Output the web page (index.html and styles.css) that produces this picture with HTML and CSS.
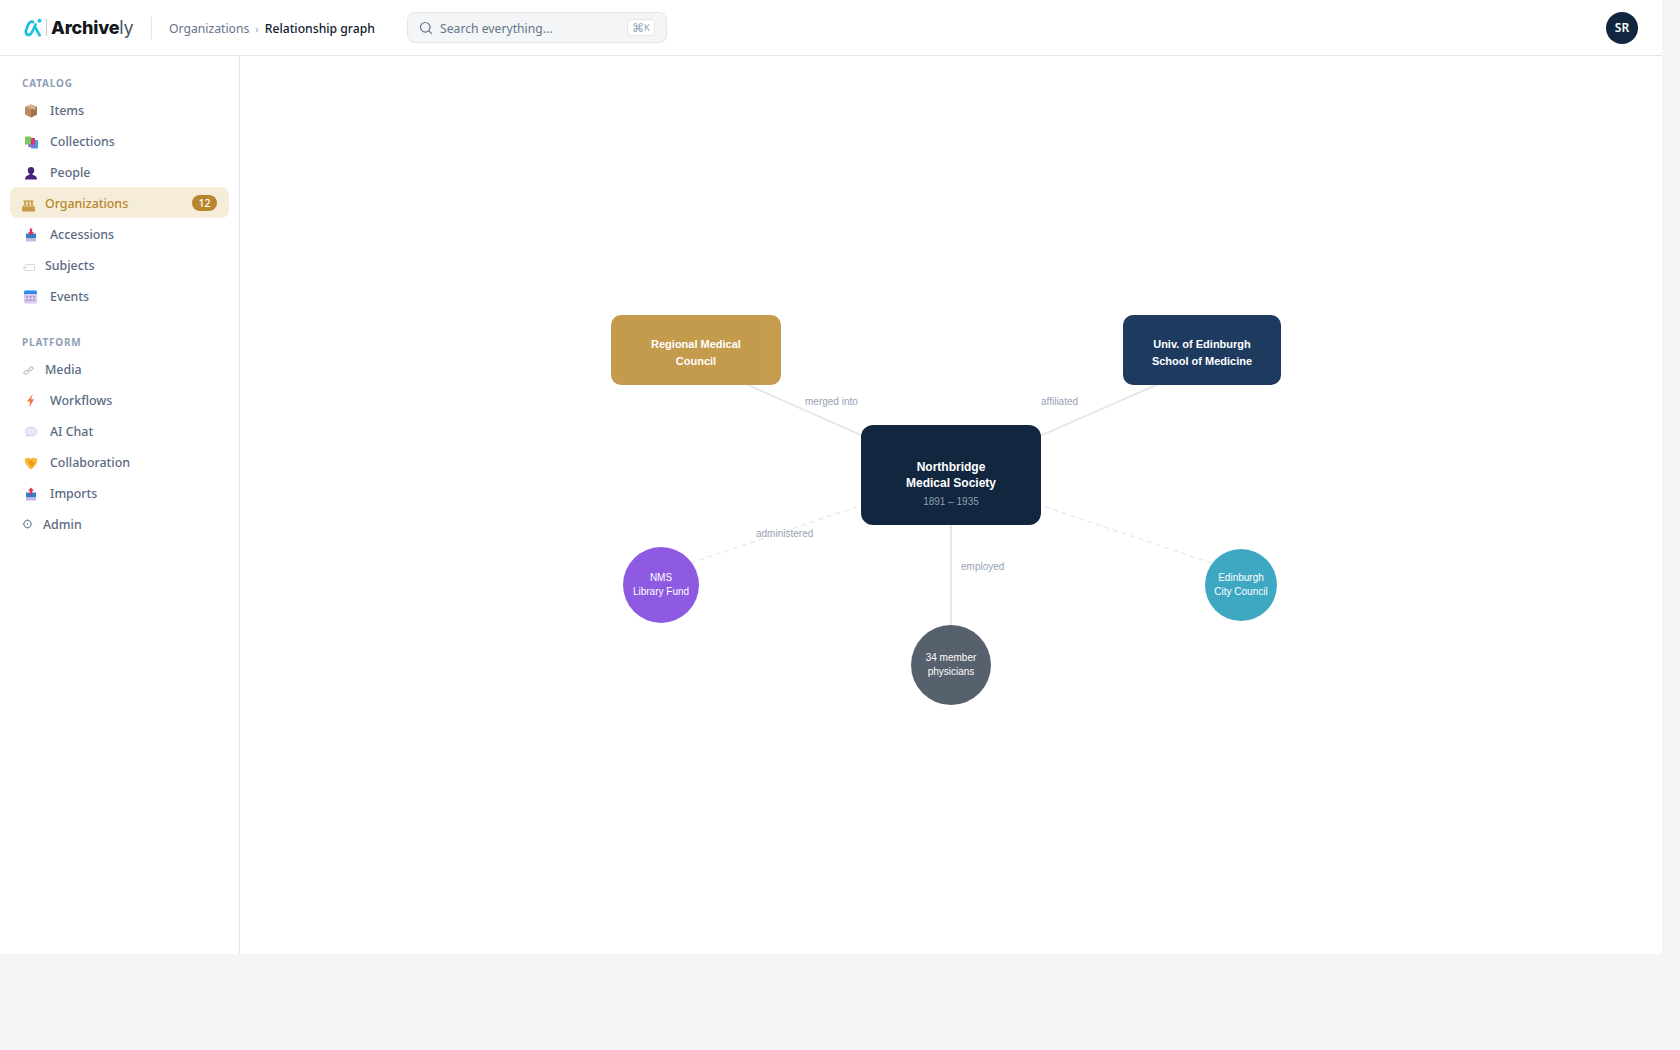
FILE: index.html
```html
<!DOCTYPE html>
<html lang="en">
<head>
<meta charset="utf-8">
<title>Archively – Relationship graph</title>
<link rel="stylesheet" href="styles.css">
</head>
<body>
<div class="app">
  <header class="topbar">
    <div class="brand">
      <svg class="brand-mark" viewBox="0 0 20 20" width="20" height="20" aria-hidden="true">
        <path d="M9 4C7 2.800 5.200 4.500 3.800 7.500L2 12.500C1.200 15.500 3.500 18 6 16.500 8 15.300 9.500 11 11.500 6.500" fill="none" stroke="#1cc0de" stroke-width="2.700" stroke-linecap="round"/>
        <path d="M11.300 9.500L15.700 17.300" fill="none" stroke="#1cc0de" stroke-width="2.700" stroke-linecap="round"/>
        <circle cx="15.500" cy="2.700" r="2" fill="#1cc0de"/>
      </svg>
      <span class="brand-rule"></span>
      <span class="brand-name">Archive<span class="brand-tail">ly</span></span>
    </div>
    <span class="topbar-rule"></span>
    <nav class="crumbs">
      <span class="crumb">Organizations</span>
      <span class="crumb-sep">›</span>
      <span class="crumb-current">Relationship graph</span>
    </nav>
    <div class="search">
      <svg class="search-icon" viewBox="0 0 14 14" width="14" height="14" aria-hidden="true">
        <circle cx="6.300" cy="6.300" r="4.800" fill="none" stroke="#64748b" stroke-width="1.200"/>
        <path d="M9.800 9.800l2.900 2.900" stroke="#64748b" stroke-width="1.200" stroke-linecap="round"/>
      </svg>
      <span class="search-text">Search everything...</span>
      <span class="search-key"><span class="key-cmd">⌘</span>K</span>
    </div>
    <div class="avatar">SR</div>
  </header>

  <div class="body">
    <aside class="sidebar">
      <div class="nav-label">Catalog</div>
      <a class="nav-item">
        <svg class="ico" viewBox="0 0 18 18" aria-hidden="true"><path d="M9 3.500l6 2.400v7.500l-6 3.100-6-3.100V5.900z" fill="#b98a60"/><path d="M9 8.500l6-2.600v7.500l-6 3.100z" fill="#a0724c"/><path d="M3 5.900L9 8.500l6-2.600L9 3.500z" fill="#cfa57d"/><path d="M5.800 4.700l6 2.500v2l1.200-.6V6.600l-6-2.500z" fill="#e3c6a6"/></svg>
        <span class="nav-text">Items</span>
      </a>
      <a class="nav-item">
        <svg class="ico" viewBox="0 0 18 18" aria-hidden="true"><rect x="9" y="8" width="7" height="8.500" fill="#4a9ae0"/><rect x="6.500" y="6" width="6.500" height="9" fill="#d8347e"/><rect x="3" y="4.500" width="6" height="8" fill="#7ac95c"/><rect x="6.500" y="12.500" width="6.500" height="2.500" fill="#8b6fd0"/></svg>
        <span class="nav-text">Collections</span>
      </a>
      <a class="nav-item">
        <svg class="ico" viewBox="0 0 18 18" aria-hidden="true"><ellipse cx="9" cy="7.500" rx="3.200" ry="3.400" fill="#45247a"/><path d="M3 16.500c0-3.300 2.600-4.800 6-4.800s6 1.500 6 4.800z" fill="#45247a"/><path d="M7.500 10h3v2.500h-3z" fill="#45247a"/></svg>
        <span class="nav-text">People</span>
      </a>
      <a class="nav-item is-active">
        <svg class="ico ico-narrow" viewBox="0 0 13 18" aria-hidden="true"><path d="M0 12.500h13v5H0z" fill="#c99a45"/><path d="M1 10.800h11v2H1z" fill="#dcb873"/><path d="M2.200 7.500h1.700v3.500H2.200zM5.700 7.500h1.700v3.500H5.700zM9.100 7.500h1.700v3.500H9.100z" fill="#c0913c"/><path d="M1.500 6.500h10v1.200h-10z" fill="#c0913c"/></svg>
        <span class="nav-text">Organizations</span>
        <span class="badge">12</span>
      </a>
      <a class="nav-item">
        <svg class="ico" viewBox="0 0 18 18" aria-hidden="true"><path d="M4 8.500h10v5H4z" fill="#2f7fc8"/><path d="M4 13.500h10v3H4z" fill="#c9b8e4"/><path d="M7.800 3.500h2.400v3.500H12l-3 3.500L6 7h1.800z" fill="#dc3350"/></svg>
        <span class="nav-text">Accessions</span>
      </a>
      <a class="nav-item">
        <svg class="ico ico-narrow" viewBox="0 0 13 18" aria-hidden="true"><path d="M3.500 8.500H12.500v6H3.500L1 11.500z" fill="#fbfcfd" stroke="#c8d0d8" stroke-width=".8"/><circle cx="3.400" cy="11.500" r=".7" fill="#9fb0bb"/></svg>
        <span class="nav-text">Subjects</span>
      </a>
      <a class="nav-item">
        <svg class="ico" viewBox="0 0 18 18" aria-hidden="true"><rect x="2" y="3.500" width="13" height="13" rx="1.500" fill="#d7c9f0"/><path d="M2 5a1.500 1.500 0 0 1 1.500-1.500h10A1.500 1.500 0 0 1 15 5v2H2z" fill="#2f8ceb"/><path d="M4.200 9h1.700v1.600H4.200zM7.700 9h1.700v1.600H7.700zM11.100 9h1.700v1.600h-1.700zM4.200 12.300h1.700v1.600H4.200zM7.700 12.300h1.700v1.600H7.700zM11.100 12.300h1.700v1.600h-1.700z" fill="#9b8bc0"/></svg>
        <span class="nav-text">Events</span>
      </a>

      <div class="nav-label nav-label-gap">Platform</div>
      <a class="nav-item">
        <svg class="ico ico-narrow" viewBox="0 0 13 18" aria-hidden="true"><path d="M1.500 12.700l3.500-2.700 1.800 2-3.600 2.500zM6.500 9l3.300-2.500 1.800 2-3.400 2.600z" fill="#fff" stroke="#a0acb6" stroke-width="1"/></svg>
        <span class="nav-text">Media</span>
      </a>
      <a class="nav-item">
        <svg class="ico" viewBox="0 0 18 18" aria-hidden="true"><path d="M10.800 3L5 10.500h3.200L7.200 16.200 12 8.300H9z" fill="#f2703c"/></svg>
        <span class="nav-text">Workflows</span>
      </a>
      <a class="nav-item">
        <svg class="ico" viewBox="0 0 18 18" aria-hidden="true"><path d="M5 12.500l-1 2.800 4-2z" fill="#cfc4ea"/><ellipse cx="9" cy="9.500" rx="5.800" ry="4.400" fill="#ebe6f8" stroke="#cfc4ea" stroke-width=".8"/></svg>
        <span class="nav-text">AI Chat</span>
      </a>
      <a class="nav-item">
        <svg class="ico" viewBox="0 0 18 18" aria-hidden="true"><path d="M3 5.500L7 4.700l2 1 2-1 4 .8c.3 2.800-.2 5-1.500 6.300L10 16h-2L4.500 11.800C3.200 10.500 2.700 8.300 3 5.500z" fill="#f9b92e"/><path d="M5.500 9l3.500-2.500 4 4.300-2.800 3.400z" fill="#ef9a22"/></svg>
        <span class="nav-text">Collaboration</span>
      </a>
      <a class="nav-item">
        <svg class="ico" viewBox="0 0 18 18" aria-hidden="true"><path d="M4 8.500h10v5H4z" fill="#2f7fc8"/><path d="M4 13.500h10v3H4z" fill="#c9b8e4"/><path d="M9 3.500l3 3.300h-1.800v4H7.800v-4H6z" fill="#dc3350"/></svg>
        <span class="nav-text">Imports</span>
      </a>
      <a class="nav-item">
        <svg class="ico ico-tiny" viewBox="0 0 11 18" aria-hidden="true"><circle cx="5.500" cy="9" r="3.700" fill="none" stroke="#5b6b80" stroke-width=".9"/><circle cx="5.500" cy="9" r=".7" fill="#5b6b80"/><path d="M5.500 4.300v1M5.500 12.700v1M.8 9h1M9.200 9h1" stroke="#5b6b80" stroke-width=".9"/></svg>
        <span class="nav-text">Admin</span>
      </a>
    </aside>

    <main class="canvas">
      <svg class="edges" viewBox="0 0 1422 898" width="1422" height="898" aria-hidden="true">
        <path class="edge" d="M711 419L456 306"/>
        <path class="edge" d="M711 419L962 309"/>
        <path class="edge" d="M711 419V589"/>
        <path class="edge edge-dash" d="M711 419L421 517"/>
        <path class="edge edge-dash" d="M711 419L1001 517"/>
      </svg>

      <div class="node node-box node-gold">Regional Medical<br>Council</div>
      <div class="node node-box node-navy">Univ. of Edinburgh<br>School of Medicine</div>
      <div class="node node-center">
        <div class="center-name">Northbridge<br>Medical Society</div>
        <div class="center-dates">1891 – 1935</div>
      </div>
      <div class="node node-round node-purple">NMS<br>Library Fund</div>
      <div class="node node-round node-teal">Edinburgh<br>City Council</div>
      <div class="node node-round node-slate">34 member<br>physicians</div>

      <span class="edge-label label-merged">merged into</span>
      <span class="edge-label label-affiliated">affiliated</span>
      <span class="edge-label label-admin">administered</span>
      <span class="edge-label label-employed">employed</span>
    </main>
  </div>
</div>
</body>
</html>
```
FILE: styles.css
```css
* { box-sizing: border-box; }

html, body { margin: 0; padding: 0; }

body {
  background: #f4f5f7;
  font-family: "Noto Sans", "Open Sans", sans-serif;
  min-height: 1050px;
  overflow: hidden;
}

.app {
  width: 1662px;
  height: 954px;
  background: #fff;
  display: flex;
  flex-direction: column;
}

/* Top bar */
.topbar {
  height: 56px;
  flex: none;
  display: flex;
  align-items: center;
  padding: 0 24px;
  border-bottom: 1px solid #e4e6ea;
}

.brand { display: flex; align-items: center; width: 110px; flex: none; }
.brand-mark { flex: none; }
.brand-rule { width: 1px; height: 17px; background: #c9ced6; margin: 0 4px 0 2px; }
.brand-name {
  font-family: Inter, "Noto Sans", sans-serif;
  font-weight: 800;
  font-size: 18px;
  letter-spacing: -0.2px;
  color: #14171c;
}
.brand-tail { font-weight: 400; color: #4c5560; }

.topbar-rule { width: 1px; height: 22px; background: #e4e6ea; margin: 0 17px; flex: none; }

.crumbs { display: flex; align-items: center; font-size: 12.2px; gap: 6px; width: 238px; flex: none; }
.crumb { color: #64748b; padding-top: 2px; }
.crumb-sep { color: #94a3b8; font-size: 11px; padding-top: 2px; }
.crumb-current { color: #0f1c30; font-weight: 500; padding-top: 2px; }

.search {
  width: 260px;
  height: 31px;
  flex: none;
  display: flex;
  align-items: center;
  gap: 7px;
  padding: 0 11px;
  background: #f4f5f7;
  border: 1px solid #e4e6ea;
  border-radius: 8px;
}
.search-icon { flex: none; }
.search-text { font-size: 12.2px; color: #64748b; flex: 1; padding-top: 2px; }
.search-key {
  height: 17px;
  width: 28px;
  display: flex;
  align-items: center;
  justify-content: center;
  font-size: 9.5px;
  color: #94a3b8;
  background: #fff;
  border: 1px solid #e4e6ea;
  border-radius: 4px;
}
.key-cmd { font-size: 12px; font-weight: 400; }

.avatar {
  width: 32px;
  height: 32px;
  margin-left: auto;
  border-radius: 50%;
  background: #12273f;
  color: #fff;
  font-size: 12px;
  font-weight: 600;
  display: flex;
  align-items: center;
  justify-content: center;
}

/* Body */
.body { flex: 1; display: flex; min-height: 0; }

.sidebar {
  width: 240px;
  flex: none;
  padding: 20px 10px 0;
  border-right: 1px solid #e4e6ea;
  background: #fff;
}

.nav-label {
  padding-left: 12px;
  height: 14px;
  margin-bottom: 4px;
  font-size: 10px;
  line-height: 14px;
  font-weight: 700;
  letter-spacing: 0.8px;
  text-transform: uppercase;
  color: #8f9eb6;
}
.nav-label-gap { margin-top: 24px; }

.nav-item {
  height: 31px;
  display: flex;
  align-items: center;
  gap: 10px;
  padding: 0 12px;
  font-size: 12.4px;
  font-weight: 500;
  color: #5a6b82;
  border-radius: 8px;
}
.nav-item.is-active { background: #f5ecd9; color: #b8862d; }
.nav-text { flex: 1; padding-top: 2px; }

.ico { width: 18px; height: 18px; flex: none; }
.ico-narrow { width: 13px; }
.ico-tiny { width: 11px; }

.badge {
  min-width: 25px;
  height: 16px;
  border-radius: 8px;
  background: #b8862d;
  color: #fff;
  font-size: 10.5px;
  font-weight: 500;
  line-height: 16px;
  text-align: center;
}

/* Graph canvas: nodes are placed freely on it */
.canvas { flex: 1; position: relative; background: #fff; overflow: hidden; }

.edges { position: absolute; left: 0; top: 0; }
.edge { fill: none; stroke: #e5e7eb; stroke-width: 2; }
.edge-dash { stroke: #e8eaee; stroke-width: 1.5; stroke-dasharray: 5 4; }

.node {
  position: absolute;
  display: flex;
  flex-direction: column;
  align-items: center;
  justify-content: center;
  text-align: center;
  color: #fff;
  font-family: "Liberation Sans", Arial, sans-serif;
  opacity: 0.97;
}

.node-box { height: 70px; top: 259px; padding-top: 6px; border-radius: 10px; font-size: 11px; font-weight: 700; line-height: 17px; }
.node-gold { left: 371px; width: 170px; background: #c39848; }
.node-navy { left: 883px; width: 158px; background: #1e3a5f; opacity: 1; }

.node-center {
  left: 621px;
  top: 369px;
  width: 180px;
  height: 100px;
  padding-top: 18px;
  border-radius: 12px;
  background: #12273f;
  opacity: 1;
}
.center-name { font-size: 12px; font-weight: 700; line-height: 16px; }
.center-dates { margin-top: 4px; font-size: 10px; line-height: 14px; color: #8f9eb2; }

.node-round { border-radius: 50%; font-size: 10px; line-height: 14px; }
.node-purple { left: 383px; top: 491px; width: 76px; height: 76px; background: #8b55e2; }
.node-teal { left: 965px; top: 493px; width: 72px; height: 72px; background: #38a6c2; }
.node-slate { left: 671px; top: 569px; width: 80px; height: 80px; background: #525b69; }

.edge-label {
  position: absolute;
  font-family: "Liberation Sans", Arial, sans-serif;
  font-size: 10px;
  line-height: 12px;
  color: #98a3b5;
}
.label-merged { left: 565px; top: 340px; }
.label-affiliated { left: 801px; top: 340px; }
.label-admin { left: 516px; top: 472px; }
.label-employed { left: 721px; top: 505px; }
```
